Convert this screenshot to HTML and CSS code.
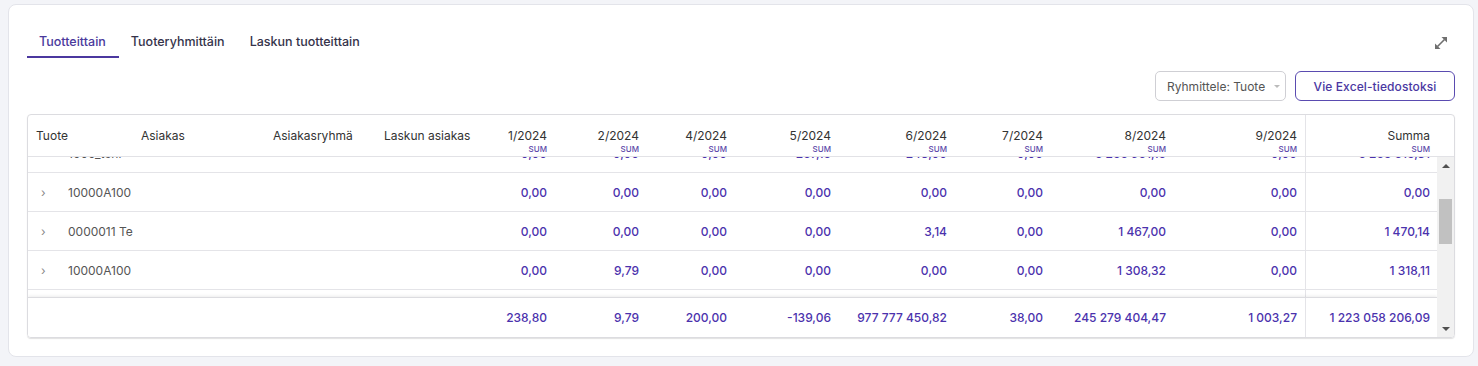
FILE: index.html
```html
<!DOCTYPE html>
<html lang="fi">
<head>
<meta charset="utf-8">
<title>Tuotteittain</title>
<link rel="stylesheet" href="styles.css">
</head>
<body>
<div class="card">
  <div class="tabs-row">
    <div class="tabs">
      <div class="tab active">Tuotteittain</div>
      <div class="tab">Tuoteryhmittäin</div>
      <div class="tab">Laskun tuotteittain</div>
    </div>
    <svg class="expand" width="16" height="16" viewBox="0 0 16 16">
      <path d="M4.5 11.5 L11.5 4.5" stroke="#6f6f6f" stroke-width="1.6"/>
      <path d="M8.5 2 H14 V7.5 Z" fill="#6f6f6f"/>
      <path d="M2 8.5 V14 H7.5 Z" fill="#6f6f6f"/>
    </svg>
  </div>

  <div class="toolbar">
    <div class="select">Ryhmittele: Tuote <span class="caret"></span></div>
    <button class="btn">Vie Excel-tiedostoksi</button>
  </div>

  <div class="grid">
    <div class="grid-head cols">
      <div class="hc">Tuote</div>
      <div class="hc">Asiakas</div>
      <div class="hc">Asiakasryhmä</div>
      <div class="hc">Laskun asiakas</div>
      <div class="hc num"><span>1/2024</span><small>SUM</small></div>
      <div class="hc num"><span>2/2024</span><small>SUM</small></div>
      <div class="hc num"><span>4/2024</span><small>SUM</small></div>
      <div class="hc num"><span>5/2024</span><small>SUM</small></div>
      <div class="hc num"><span>6/2024</span><small>SUM</small></div>
      <div class="hc num"><span>7/2024</span><small>SUM</small></div>
      <div class="hc num"><span>8/2024</span><small>SUM</small></div>
      <div class="hc num"><span>9/2024</span><small>SUM</small></div>
      <div class="hc num pin"><span>Summa</span><small>SUM</small></div>
      <div class="hc spacer"></div>
    </div>

    <div class="grid-body">
      <div class="grid-main">
        <div class="viewport">
          <div class="row cols partial">
            <div class="c name"><span class="chev">›</span>1000_tehr</div>
            <div class="c"></div><div class="c"></div><div class="c"></div>
            <div class="c v">0,00</div><div class="c v">0,00</div><div class="c v">0,00</div>
            <div class="c v">-257,15</div><div class="c v">243,00</div><div class="c v">0,00</div>
            <div class="c v">5 255 951,15</div><div class="c v">0,00</div><div class="c v pin">5 256 516,31</div>
          </div>
          <div class="row cols">
            <div class="c name"><span class="chev">›</span>10000A100</div>
            <div class="c"></div><div class="c"></div><div class="c"></div>
            <div class="c v">0,00</div><div class="c v">0,00</div><div class="c v">0,00</div>
            <div class="c v">0,00</div><div class="c v">0,00</div><div class="c v">0,00</div>
            <div class="c v">0,00</div><div class="c v">0,00</div><div class="c v pin">0,00</div>
          </div>
          <div class="row cols">
            <div class="c name"><span class="chev">›</span>0000011 Te</div>
            <div class="c"></div><div class="c"></div><div class="c"></div>
            <div class="c v">0,00</div><div class="c v">0,00</div><div class="c v">0,00</div>
            <div class="c v">0,00</div><div class="c v">3,14</div><div class="c v">0,00</div>
            <div class="c v">1 467,00</div><div class="c v">0,00</div><div class="c v pin">1 470,14</div>
          </div>
          <div class="row cols">
            <div class="c name"><span class="chev">›</span>10000A100</div>
            <div class="c"></div><div class="c"></div><div class="c"></div>
            <div class="c v">0,00</div><div class="c v">9,79</div><div class="c v">0,00</div>
            <div class="c v">0,00</div><div class="c v">0,00</div><div class="c v">0,00</div>
            <div class="c v">1 308,32</div><div class="c v">0,00</div><div class="c v pin">1 318,11</div>
          </div>
          <div class="row cols">
            <div class="c name"><span class="chev">›</span>10000B200</div>
            <div class="c"></div><div class="c"></div><div class="c"></div>
            <div class="c v">0,00</div><div class="c v">0,00</div><div class="c v">0,00</div>
            <div class="c v">0,00</div><div class="c v">0,00</div><div class="c v">0,00</div>
            <div class="c v">0,00</div><div class="c v">0,00</div><div class="c v pin">0,00</div>
          </div>
        </div>
        <div class="footer cols">
          <div class="c"></div><div class="c"></div><div class="c"></div><div class="c"></div>
          <div class="c v">238,80</div><div class="c v">9,79</div><div class="c v">200,00</div>
          <div class="c v">-139,06</div><div class="c v">977 777 450,82</div><div class="c v">38,00</div>
          <div class="c v">245 279 404,47</div><div class="c v">1 003,27</div><div class="c v pin">1 223 058 206,09</div>
        </div>
      </div>
      <div class="vscroll">
        <div class="sbtn"><span class="tri up"></span></div>
        <div class="track"><div class="thumb"></div></div>
        <div class="sbtn"><span class="tri down"></span></div>
      </div>
    </div>
  </div>
</div>
</body>
</html>
```

FILE: styles.css
```css
* { box-sizing: border-box; }

html, body {
  margin: 0;
  background: #f3f4f8;
}

body {
  padding: 4px 4px 0 8px;
  font-family: Inter, "Noto Sans", sans-serif;
  color: #333;
}

.card {
  background: #fff;
  border: 1px solid #e3e4ea;
  border-radius: 8px;
  padding: 18px 18px 18px 18px;
}

/* tabs */
.tabs-row {
  display: flex;
  align-items: center;
  justify-content: space-between;
}

.tabs {
  display: flex;
}

.tab {
  padding: 11px 13px 7px 12px;
  line-height: 15px;
  font-size: 12.5px;
  font-weight: 500;
  color: #35334a;
  border-bottom: 2px solid transparent;
}

.tab.active {
  color: #4a3a9c;
  border-bottom-color: #4b389f;
}

.expand {
  margin-right: 6px;
  margin-top: 5px;
}

/* toolbar */
.toolbar {
  display: flex;
  justify-content: flex-end;
  gap: 9px;
  margin-top: 13px;
}

.select {
  height: 30px;
  width: 131px;
  border: 1px solid #cfcfd4;
  border-radius: 5px;
  display: flex;
  align-items: center;
  padding: 0 0 0 11px;
  font-size: 12px;
  color: #555;
}

.caret {
  margin-left: 9px;
  width: 0;
  height: 0;
  border-left: 3px solid transparent;
  border-right: 3px solid transparent;
  border-top: 3px solid #bbb;
}

.btn {
  height: 30px;
  width: 160px;
  border: 1px solid #5a4bb0;
  border-radius: 6px;
  background: #fff;
  font-family: Inter, "Noto Sans", sans-serif;
  font-size: 12px;
  font-weight: 500;
  letter-spacing: 0.1px;
  color: #4a37a2;
  padding: 0;
}

/* grid */
.grid {
  margin-top: 13px;
  border: 1px solid #dcdce0;
  border-radius: 4px;
  box-shadow: 0 1px 1px rgba(0,0,0,0.12);
  overflow: hidden;
  font-size: 12px;
}

.cols {
  display: grid;
  grid-template-columns: 105px 132px 111px 91px 88px 92px 88px 104px 116px 96px 123px 131px 133px;
}

.grid-head {
  grid-template-columns: 105px 132px 111px 91px 88px 92px 88px 104px 116px 96px 123px 131px 133px 17px;
  height: 42px;
  border-bottom: 1px solid #e2e2e6;
}

.hc {
  padding: 13px 8px 0;
  line-height: 15px;
  color: #333;
  white-space: nowrap;
}

.hc.num {
  display: flex;
  flex-direction: column;
  align-items: flex-end;
}

.hc small {
  font-size: 8px;
  line-height: 9px;
  margin-top: 2px;
  color: #5a48a8;
  font-weight: 500;
}

.pin {
  border-left: 1px solid #e4e4e8;
}

.grid-body {
  display: flex;
  height: 180px;
}

.grid-main {
  flex: 1;
  display: flex;
  flex-direction: column;
  min-width: 0;
}

.viewport {
  flex: 1;
  overflow: hidden;
}

.row {
  height: 39px;
  border-bottom: 1px solid #e4e4e8;
}

.row.partial {
  margin-top: -23px;
}

.c {
  display: flex;
  align-items: center;
  padding: 0 8px;
  white-space: nowrap;
  overflow: hidden;
}

.c.v {
  justify-content: flex-end;
  color: #4b32ad;
  font-weight: 500;
}

.c.name {
  color: #555;
  padding-left: 13px;
  padding-right: 0;
}

.chev {
  color: #888;
  font-size: 12px;
  width: 27px;
  flex: none;
}

.footer {
  height: 40px;
  border-top: 1px solid #dcdce0;
  box-shadow: 0 -1px 3px rgba(0,0,0,0.08);
  background: #fff;
}

/* scrollbar */
.vscroll {
  width: 17px;
  background: #f1f1f1;
  display: flex;
  flex-direction: column;
}

.sbtn {
  height: 17px;
  display: flex;
  align-items: center;
  justify-content: center;
}

.tri {
  width: 0;
  height: 0;
  border-left: 4px solid transparent;
  border-right: 4px solid transparent;
}

.tri.up { border-bottom: 4px solid #505050; }
.tri.down { border-top: 4px solid #505050; }

.track {
  flex: 1;
  padding: 25px 2px 0;
}

.thumb {
  height: 45px;
  background: #c1c1c1;
}
```
